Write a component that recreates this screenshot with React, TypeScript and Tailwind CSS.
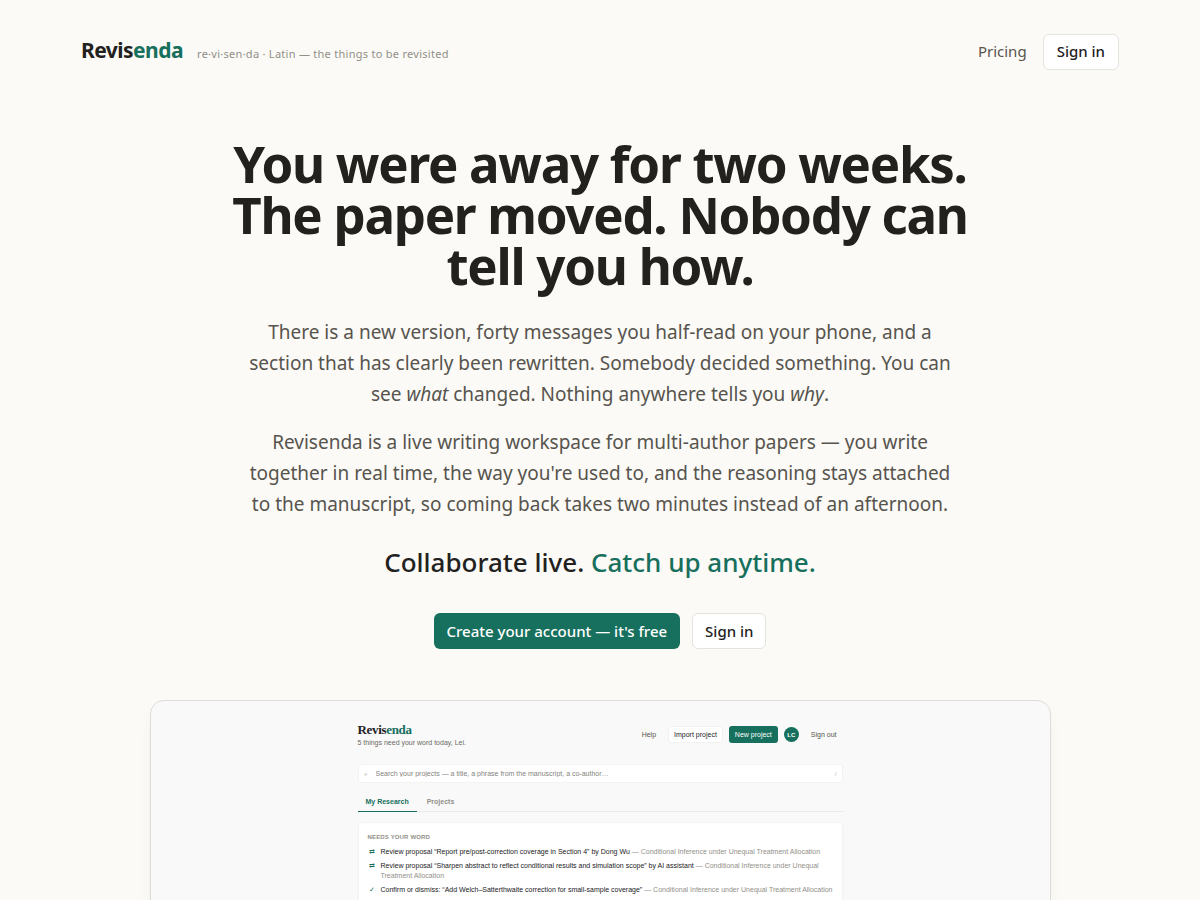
interface Task {
  icon: string;
  title: string;
  project: string;
}

const PROJECT = "Conditional Inference under Unequal Treatment Allocation";

const tasks: Task[] = [
  {
    icon: "⇄",
    title: "Review proposal “Report pre/post-correction coverage in Section 4” by Dong Wu",
    project: PROJECT,
  },
  {
    icon: "⇄",
    title: "Review proposal “Sharpen abstract to reflect conditional results and simulation scope” by AI assistant",
    project: PROJECT,
  },
  {
    icon: "✓",
    title: "Confirm or dismiss: “Add Welch–Satterthwaite correction for small-sample coverage”",
    project: PROJECT,
  },
];

function Header() {
  return (
    <header className="mx-auto flex w-full max-w-[1102px] items-start justify-between px-8 pt-[34px]">
      <div className="flex items-baseline gap-[14px]">
        <a href="#" className="text-[21px] font-bold leading-8 tracking-tight">
          Revis<span className="text-[#176f5d]">enda</span>
        </a>
        <span className="text-[11px] tracking-wide text-[#918f88]">
          re·vi·sen·da · Latin — the things to be revisited
        </span>
      </div>
      <nav className="flex items-baseline gap-4 text-[15px]">
        <a href="#" className="text-[#57544e]">
          Pricing
        </a>
        <button className="h-9 rounded-md border border-[#e5e3dd] bg-white px-[13px] pb-[2px] font-medium">
          Sign in
        </button>
      </nav>
    </header>
  );
}

function Hero() {
  return (
    <section className="mx-auto flex max-w-[760px] flex-col items-center pt-[68px] text-center">
      <h1 className="text-[51px] font-bold leading-[51px] tracking-tight">
        You were away for two weeks. The paper moved. Nobody can tell you how.
      </h1>
      <div className="mt-[26px] flex max-w-[720px] flex-col gap-[17px] text-[19px] leading-[31px] text-[#57544e]">
        <p>
          There is a new version, forty messages you half-read on your phone, and a section that has clearly been
          rewritten. Somebody decided something. You can see <em>what</em> changed. Nothing anywhere tells you{" "}
          <em>why</em>.
        </p>
        <p>
          Revisenda is a live writing workspace for multi-author papers — you write together in real time, the way
          you're used to, and the reasoning stays attached to the manuscript, so coming back takes two minutes instead
          of an afternoon.
        </p>
      </div>
      <p className="mt-[22px] text-[26px] font-medium leading-10">
        Collaborate live. <span className="text-[#176f5d]">Catch up anytime.</span>
      </p>
      <div className="mt-[31px] flex gap-3 text-[15px] font-medium">
        <button className="h-9 rounded-md bg-[#176f5d] px-[13px] text-white">Create your account — it's free</button>
        <button className="h-9 rounded-md border border-[#e5e3dd] bg-white px-3">Sign in</button>
      </div>
    </section>
  );
}

function Preview() {
  return (
    <section className="mx-auto mt-[51px] w-[calc(100%-64px)] max-w-[901px] rounded-[14px] border border-[#dddcd8] bg-[#f9f9f9] pb-24 font-['Liberation_Sans',sans-serif] text-[7px] leading-[10px] shadow-lg shadow-black/5">
      <div className="mx-auto w-full max-w-[485px] pt-[21px]">
        <div className="flex items-start justify-between">
          <div>
            <div className="font-['Liberation_Serif',serif] text-[13px] font-bold leading-4 tracking-tight">
              Revis<span className="text-[#176f5d]">enda</span>
            </div>
            <p className="text-[#6b6963]">5 things need your word today, Lei.</p>
          </div>
          <div className="flex items-center pt-1 text-[#57544e]">
            <a href="#">Help</a>
            <button className="ml-3 h-[17px] rounded-[3px] border border-[#f1f1ef] bg-white px-[5px] text-[#22211e]">
              Import project
            </button>
            <button className="ml-[6px] h-[17px] rounded-[3px] bg-[#176f5d] px-[6px] text-white">New project</button>
            <span className="ml-[6px] flex size-[15px] items-center justify-center rounded-full bg-[#176f5d] text-[6px] font-bold text-white">
              LC
            </span>
            <a href="#" className="ml-3 mr-[6px]">
              Sign out
            </a>
          </div>
        </div>

        <label className="mt-4 flex h-[19px] items-center rounded-[3px] border border-[#f3f3f1] bg-white px-[5px]">
          <span className="w-3 text-[#a3a19b]">⌕</span>
          <input
            aria-label="Search your projects"
            placeholder="Search your projects — a title, a phrase from the manuscript, a co-author…"
            className="min-w-0 flex-1 outline-none placeholder:text-[#85837d]"
          />
          <span className="text-[5px] text-[#a3a19b]">/</span>
        </label>

        <div className="mt-[9px] flex border-b border-[#ebebe9] font-bold">
          <button className="-mb-px h-[20px] border-b border-[#176f5d] px-2 text-[#176f5d]">My Research</button>
          <button className="h-[19px] px-[10px] text-[#918f88]">Projects</button>
        </div>

        <div className="mt-[10px] rounded-[4px] border border-[#f3f3f1] bg-white px-[9px] py-[9px] shadow-xs">
          <h2 className="text-[6px] font-bold uppercase tracking-wide text-[#918f88]">Needs your word</h2>
          <ul className="mt-[5px] flex flex-col gap-[4px]">
            {tasks.map((task) => (
              <li key={task.title} className="flex">
                <span className="w-[13px] shrink-0 pl-px text-[#176f5d]">{task.icon}</span>
                <p className="text-[#22211e]">
                  {task.title} <span className="text-[#918f88]">— {task.project}</span>
                </p>
              </li>
            ))}
          </ul>
        </div>
      </div>
    </section>
  );
}

export default function App() {
  return (
    <main className="min-h-screen bg-[#fbfaf6] pb-16 font-['Noto_Sans',sans-serif] text-[#22211e]">
      <Header />
      <Hero />
      <Preview />
    </main>
  );
}
